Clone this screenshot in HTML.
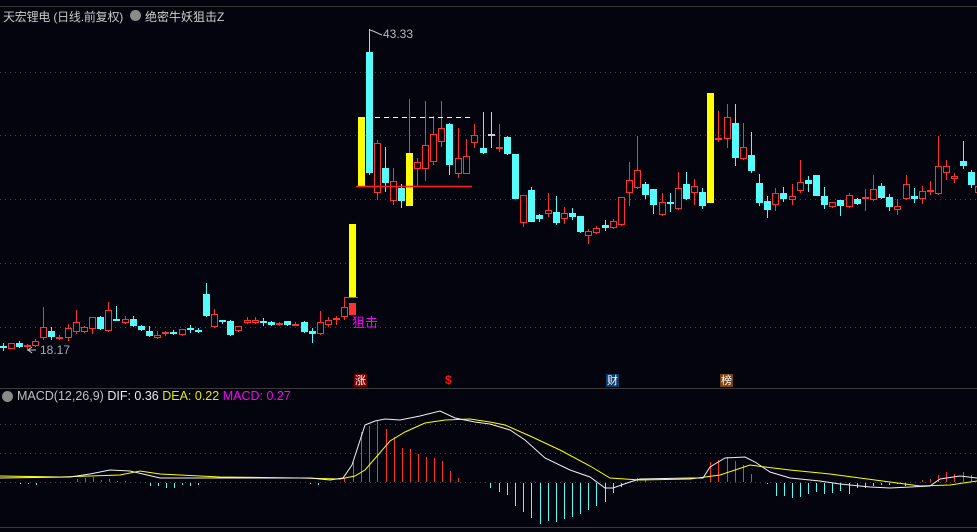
<!DOCTYPE html>
<html><head><meta charset="utf-8"><style>
html,body{margin:0;padding:0;background:#04040e;}
body{width:977px;height:532px;overflow:hidden;position:relative;font-family:"Liberation Sans","Noto Sans CJK SC",sans-serif;}
.t{position:absolute;white-space:nowrap;font-size:13px;}
</style></head><body>
<svg id="s" width="977" height="532" style="position:absolute;left:0;top:0" xmlns="http://www.w3.org/2000/svg"></svg>
<div class="t" style="left:3px;top:8px;color:#c8c8c8;font-size:12px;letter-spacing:-0.2px;">天宏锂电 (日线.前复权)</div>
<div style="position:absolute;left:130px;top:10px;width:11px;height:11px;border-radius:50%;background:#8a8a8a;"></div>
<div class="t" style="left:145px;top:8px;color:#d0d0d0;font-size:12px;">绝密牛妖狙击Z</div>
<div class="t" style="left:383px;top:27px;color:#b8b8c8;font-size:12px;">43.33</div>
<div class="t" style="left:40px;top:343px;color:#a8a8b8;font-size:12px;">18.17</div>
<div class="t" style="left:352px;top:312px;color:#ff00ff;font-size:13px;">狙击</div>
<div style="position:absolute;left:354px;top:374px;width:13px;height:13px;background:#7a0000;color:#fff;font-size:11px;line-height:13px;text-align:center;font-family:'Noto Sans CJK SC',sans-serif;">涨</div>
<div class="t" style="left:445px;top:373px;color:#ff1010;font-size:12px;font-weight:bold;">$</div>
<div style="position:absolute;left:606px;top:374px;width:13px;height:13px;background:#0a3a6a;color:#fff;font-size:11px;line-height:13px;text-align:center;font-family:'Noto Sans CJK SC',sans-serif;">财</div>
<div style="position:absolute;left:720px;top:374px;width:13px;height:13px;background:#7a4010;color:#fff;font-size:11px;line-height:13px;text-align:center;font-family:'Noto Sans CJK SC',sans-serif;">榜</div>
<div style="position:absolute;left:2px;top:391px;width:11px;height:11px;border-radius:50%;background:#8a8a8a;"></div>
<div class="t" style="left:17px;top:389px;font-size:12.5px;"><span style="color:#c0c0c0">MACD(12,26,9)</span> <span style="color:#e8e8e8">DIF: 0.36</span> <span style="color:#e8e800">DEA: 0.22</span> <span style="color:#ff00ff">MACD: 0.27</span></div>
<script>
var s='';
s+='<line x1="0" y1="6.5" x2="977" y2="6.5" stroke="#333" />';
s+='<line x1="0" y1="388.5" x2="977" y2="388.5" stroke="#3a3a3a" />';
s+='<line x1="0" y1="527.5" x2="977" y2="527.5" stroke="#3a3a3a" />';
[72,135,199,263,327,424,453,482].forEach(function(y){s+='<line x1="0" y1="'+(y+.5)+'" x2="977" y2="'+(y+.5)+'" stroke="#444" stroke-dasharray="1,4"/>';});
s+='<rect x="349" y="224" width="7" height="73" fill="#ffff00"/>';
s+='<line x1="345" y1="297.5" x2="358" y2="297.5" stroke="#ff3232"/>';
s+='<line x1="409.5" y1="99" x2="409.5" y2="153" stroke="#ff3232"/>';
s+='<rect x="358" y="117" width="7" height="69" fill="#ffff00"/>';
s+='<rect x="406" y="153" width="7" height="53" fill="#ffff00"/>';
s+='<rect x="707" y="93" width="7" height="110" fill="#ffff00"/>';
var d=[[3,347,347,343,351,'c'],[11,343,349,343,349,'r'],[19,343,347,341,348,'c'],[27,346,346,344,350,'r'],[35,341,346,339,347,'r'],[43,327,338,307,340,'r'],[51,331,337,327,340,'c'],[59,338,338,335,340,'r'],[68,328,338,324,341,'r'],[76,322,332,310,334,'r'],[84,327,332,326,333,'r'],[92,317,329,317,334,'r'],[100,317,329,316,330,'c'],[108,310,331,302,332,'r'],[116,320,320,306,321,'c'],[125,319,323,316,324,'r'],[133,319,326,316,327,'c'],[141,326,330,325,331,'c'],[149,331,336,326,337,'c'],[157,335,338,331,339,'r'],[165,333,333,331,336,'r'],[173,332,334,330,335,'c'],[182,329,335,329,336,'r'],[190,329,329,325,333,'c'],[198,331,331,328,333,'c'],[206,294,316,283,317,'c'],[214,314,327,309,328,'r'],[222,321,322,320,324,'c'],[230,321,335,320,336,'c'],[238,326,331,326,332,'r'],[247,320,323,317,324,'r'],[255,320,323,317,324,'r'],[263,322,322,318,326,'c'],[271,322,325,321,326,'c'],[279,324,324,322,326,'r'],[287,321,325,321,326,'c'],[295,325,325,322,326,'r'],[304,322,332,321,333,'c'],[312,331,334,328,343,'c'],[320,322,334,311,335,'r'],[328,320,325,317,327,'r'],[336,318,320,316,325,'r'],[344,307,317,297,320,'r'],[352,303,315,303,315,'R'],
[369,52,173,29,175,'c'],[377,143,193,140,200,'r'],[385,168,183,147,192,'c'],[393,181,201,168,205,'r'],[401,188,201,184,208,'c'],[417,162,169,158,186,'r'],[425,145,169,101,181,'r'],[433,134,162,116,165,'r'],[441,128,142,101,147,'r'],[449,124,165,123,175,'c'],[458,158,174,128,178,'r'],[466,156,174,139,174,'r'],[474,135,143,124,148,'r'],[483,148,153,112,154,'c'],[491,135,135,112,148,'w'],[499,148,148,124,152,'r'],[507,137,154,136,155,'c'],[515,154,199,154,199,'c'],[523,195,223,195,227,'r'],[531,190,222,187,222,'c'],[539,215,219,214,222,'c'],[548,210,214,193,217,'r'],[556,212,223,196,225,'c'],[564,213,219,207,224,'r'],[572,213,217,208,220,'c'],[580,216,232,216,233,'c'],[588,231,236,229,244,'r'],[596,228,233,226,234,'r'],[605,225,228,220,231,'c'],[613,221,228,219,229,'r'],[621,197,225,197,226,'r'],[629,180,193,162,206,'r'],[637,170,188,136,189,'r'],[645,184,195,182,199,'c'],[653,189,205,189,214,'c'],[662,202,215,193,216,'r'],[670,203,203,193,212,'c'],[678,188,209,172,210,'r'],[686,184,199,172,200,'c'],[694,186,193,179,205,'r'],[702,192,206,188,209,'c'],[718,139,139,111,142,'r'],[727,117,139,104,148,'r'],[735,123,158,104,166,'c'],[743,147,159,123,160,'r'],[751,155,171,132,173,'c'],[759,183,203,174,206,'c'],[767,201,210,196,218,'c'],[775,193,205,188,211,'r'],[783,193,199,187,202,'c'],[792,196,200,184,205,'r'],[800,182,191,160,193,'r'],[808,180,184,176,192,'c'],[816,175,196,175,196,'c'],[824,196,205,187,209,'c'],[832,202,207,202,208,'r'],[840,200,206,200,216,'c'],[849,195,207,193,208,'r'],[857,199,204,198,205,'c'],[865,198,198,189,211,'r'],[873,189,200,175,201,'r'],[881,186,198,183,199,'c'],[889,197,207,194,211,'c'],[897,206,210,199,215,'r'],[906,184,199,175,200,'r'],[914,196,199,188,203,'c'],[922,191,199,186,204,'r'],[930,191,191,181,195,'r'],[938,166,194,136,195,'r'],[946,166,173,160,180,'r'],[954,176,179,173,183,'r'],[963,161,166,141,169,'c'],[971,172,185,170,188,'c'],[978,186,193,186,193,'r']];
d.forEach(function(c){var x=c[0],t=c[1],b=c[2],col=c[5]=='c'?'#54fcfc':(c[5]=='w'?'#d0d0d0':'#ff3232');
s+='<line x1="'+(x+.5)+'" y1="'+c[3]+'" x2="'+(x+.5)+'" y2="'+c[4]+'" stroke="'+col+'"/>';
if(b-t<2){s+='<rect x="'+(x-3)+'" y="'+(t-1)+'" width="7" height="2" fill="'+col+'"/>';}
else if(c[5]=='r'){s+='<rect x="'+(x-2.5)+'" y="'+(t+.5)+'" width="6" height="'+(b-t-1)+'" fill="#04040e" stroke="'+col+'"/>';}
else{s+='<rect x="'+(x-3)+'" y="'+t+'" width="7" height="'+(b-t)+'" fill="'+col+'"/>';}
});
s+='<line x1="366" y1="117.5" x2="470" y2="117.5" stroke="#ffffaa" stroke-dasharray="5,4"/>';
s+='<line x1="356" y1="186.5" x2="472" y2="186.5" stroke="#ff2020" stroke-width="1.5"/>';
s+='<polyline points="370,30 373,31 382,35" fill="none" stroke="#c8c8c8"/>';
s+='<polyline points="36,350 28,350 32,347" fill="none" stroke="#c8c8c8"/><line x1="28" y1="350" x2="32" y2="353" stroke="#c8c8c8"/>';
var red=[[344,478],[353,462],[361,432],[369,426],[377,421],[386,429],[394,437],[402,448],[410,449],[418,454],[426,457],[434,458],[442,461],[450,471],[458,478],[77,479],[85,478],[93,477],[101,480],[109,479],[117,481],[125,481],[637,478],[645,479],[710,462],[718,460],[727,457],[735,461],[743,465],[751,474],[922,480],[930,479],[938,475],[946,472],[954,474],[963,472],[971,475]];
var cy=[[150,486],[158,486],[166,488],[174,488],[182,485],[190,486],[198,485],[490,488],[499,492],[507,495],[515,506],[523,512],[531,518],[540,524],[548,521],[556,522],[564,519],[572,517],[580,514],[588,510],[596,506],[605,502],[613,493],[621,487],[767,484],[776,496],[784,496],[792,498],[800,497],[808,494],[816,492],[824,494],[832,493],[840,491],[849,494],[857,488],[865,488],[873,486],[881,485],[889,485],[897,484],[905,486],[20,484],[28,484],[36,485],[310,484],[318,485]];
red.forEach(function(p){s+='<line x1="'+(p[0]+.5)+'" y1="482" x2="'+(p[0]+.5)+'" y2="'+p[1]+'" stroke="#ff3232"/>';});
cy.forEach(function(p){s+='<line x1="'+(p[0]+.5)+'" y1="483" x2="'+(p[0]+.5)+'" y2="'+p[1]+'" stroke="#54fcfc"/>';});
s+='<polyline fill="none" stroke="#ffff00" points="0,476 60,477 120,475 140,471 160,474 220,477 300,478 340,479 355,476 365,470 378,455 390,441 405,432 425,423 445,420 470,419 490,422 505,425 530,436 560,450 590,466 610,478 640,480 690,479 720,475 750,465 765,467 790,470 830,474 860,478 890,482 920,486 950,485 977,481"/>';
s+='<polyline fill="none" stroke="#f0f0f0" points="0,478 70,477 90,474 110,470 130,471 160,478 310,478 330,480 343,478 352,465 365,425 375,421 385,419 400,420 420,416 440,411 455,418 475,422 490,424 510,430 525,440 545,458 570,470 590,477 605,488 613,488 630,482 640,479 690,478 703,478 710,467 725,458 745,457 755,462 770,472 790,478 820,481 840,484 870,487 890,488 910,487 930,486 940,479 960,476 977,478"/>';
document.getElementById('s').innerHTML=s;
</script>
</body></html>
